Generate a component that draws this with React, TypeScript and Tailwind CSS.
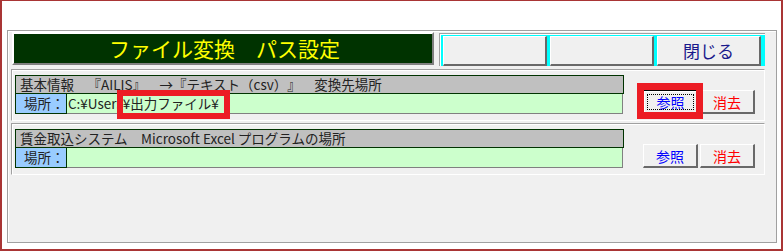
const jp = "font-['Noto_Sans_CJK_JP','Noto_Sans',sans-serif] [text-spacing-trim:space-all]";

function RaisedButton({ label, color, isDefault }: { label: string; color: string; isDefault?: boolean }) {
  if (isDefault) {
    return (
      <div className="relative w-[55px] h-[24px] border border-black bg-[#f0f0f0]">
        <div className="w-full h-full border-t border-l border-t-white border-l-white border-b border-r border-b-[#a0a0a0] border-r-[#a0a0a0] flex items-center justify-center">
          <span className={`text-[14px] leading-none ${color}`}>{label}</span>
        </div>
        <span className="absolute inset-[3px] border border-dotted border-black" />
      </div>
    );
  }
  return (
    <div className="w-[55px] h-[24px] bg-[#f0f0f0] border-t border-l border-t-white border-l-white border-b-2 border-r-2 border-b-[#696969] border-r-[#696969] flex items-center justify-center">
      <span className={`text-[14px] leading-none ${color}`}>{label}</span>
    </div>
  );
}

function Section({ title, path, focused }: { title: string; path: string; focused?: boolean }) {
  return (
    <div className="ml-[3px] w-[754px] border border-t-[#a0a0a0] border-l-[#a0a0a0] border-b-white border-r-white shadow-[inset_1px_1px_0_#fff] pl-[3px] pt-[5px] pb-[6px] flex items-end">
      <div className="w-[609px] flex flex-col">
        <div className="h-[19px] border border-[#003300] bg-[#c0c0c0] pl-[4px] text-[13.5px] leading-[17px] text-[#222] whitespace-pre">
          {title}
        </div>
        <div className="h-[20px] w-[608px] flex">
          <div className="w-[52px] shrink-0 h-full border-l border-r border-b border-[#003300] bg-[#99ccff] text-[13.5px] leading-[18px] text-[#222] pl-[8px] whitespace-pre">
            場所：
          </div>
          <div className="flex-1 h-full bg-[#ccffcc] border-r border-b border-[#808080] pl-[1px] text-[13.5px] leading-[18px] text-[#222] whitespace-pre">
            {path}
          </div>
        </div>
      </div>
      <div className="ml-[19px] flex gap-[2px]">
        <RaisedButton label="参照" color="text-[#0000ff]" isDefault={focused} />
        <RaisedButton label="消去" color="text-[#ff0000]" />
      </div>
    </div>
  );
}

export default function App() {
  return (
    <div className={`relative w-[784px] h-[251px] bg-white ${jp}`}>
      <div className="w-[783px] h-[251px] border-t border-l-2 border-r-2 border-b-2 border-[#a93535] pl-[5px] pt-[29px]">
        <div className="w-[770px] h-[213px] border border-[#a0a0a0] bg-[#f0f0f0] shadow-[inset_1px_1px_0_#fff] flex flex-col">
          <div className="flex items-start pl-[4px]">
            <div className="mt-[1px] w-[422px] h-[33px] border-2 border-t-white border-l-white border-b-[#808080] border-r-[#808080] bg-[#003300] flex items-center justify-center">
              <span className="text-[21px] leading-none text-[#ffff00] whitespace-pre pl-[3px]">ファイル変換　パス設定</span>
            </div>
            <div className="ml-[5px] mt-[2px] w-[326px] h-[33px] border-t border-l border-[#a0a0a0] shadow-[inset_1px_1px_0_#fff] bg-[#00ffff] pl-[3px] pt-[2px] flex gap-[3px]">
              {["", "", "閉じる"].map((t, i) => (
                <div
                  key={i}
                  className="w-[104px] h-[30px] bg-[#f0f0f0] border-t border-l border-t-white border-l-white border-b-2 border-r-2 border-b-[#696969] border-r-[#696969] flex items-center justify-center"
                >
                  <span className="text-[17px] leading-none text-[#1a1a8c]">{t}</span>
                </div>
              ))}
            </div>
          </div>
          <div className="mt-[3px]">
            <Section title="基本情報　『AILIS』　→『テキスト（csv）』　変換先場所" path="C:¥Users¥出力ファイル¥" focused />
          </div>
          <div className="mt-[2px]">
            <Section title="賃金取込システム　Microsoft Excel プログラムの場所" path="" />
          </div>
        </div>
      </div>
      <div className="absolute left-[117px] top-[90px] w-[113px] h-[29px] border-[6px] border-[#ec1c24]" />
      <div className="absolute left-[637px] top-[83px] w-[66px] h-[36px] border-[7px] border-[#ec1c24]" />
    </div>
  );
}
